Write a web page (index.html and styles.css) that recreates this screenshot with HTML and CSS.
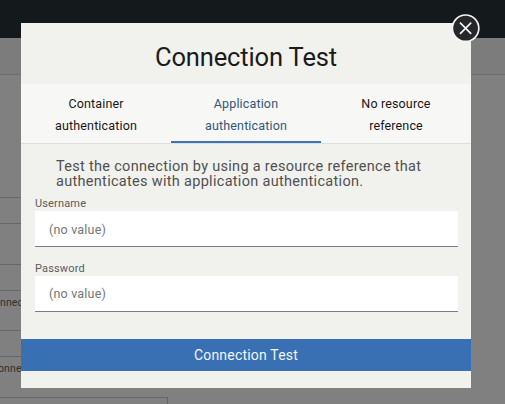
FILE: index.html
```html
<!DOCTYPE html>
<html lang="en">
<head>
<meta charset="utf-8">
<title>Connection Test</title>
<link rel="stylesheet" href="styles.css">
</head>
<body>
<div class="page" aria-hidden="true">
  <div class="topbar"></div>
  <div class="subbar"></div>
  <div class="field first"></div>
  <div class="field"></div>
  <div class="note">nnec</div>
  <div class="field"></div>
  <div class="note last">onne</div>
  <div class="panel"></div>
</div>
<main class="modal">
  <button class="close" aria-label="Close">
    <svg width="30" height="30" viewBox="0 0 30 30"><circle cx="14.6" cy="15.2" r="13.2" fill="#252729" stroke="#f4f4f2" stroke-width="1.7"/><path d="M9 9.6l11.2 11.2M20.2 9.6L9 20.8" stroke="#f4f4f2" stroke-width="1.7" fill="none"/></svg>
  </button>
  <h1>Connection Test</h1>
  <nav class="tabs">
    <a class="tab">Container<br>authentication</a>
    <a class="tab active">Application<br>authentication</a>
    <a class="tab">No resource<br>reference</a>
  </nav>
  <p class="description">Test the connection by using a resource reference that<br>authenticates with application authentication.</p>
  <form>
    <label>Username</label>
    <div class="input">(no value)</div>
    <label>Password</label>
    <div class="input password">(no value)</div>
  </form>
  <button class="submit">Connection Test</button>
</main>
</body>
</html>
```
FILE: styles.css
```css
* { box-sizing: border-box; }
body {
  margin: 0;
  width: 505px;
  height: 404px;
  overflow: hidden;
  background: #808080;
  font-family: Roboto, "Open Sans", sans-serif;
}
.page { height: 404px; overflow: hidden; }
.topbar { height: 38px; background: #141a1c; }
.subbar { height: 37px; background: #7c7c7c; border-bottom: 1px solid #6d6d6d; }
.field { width: 168px; height: 27px; border: solid #626870; border-width: 1px 0; margin-top: 40px; }
.field.first { margin-top: 122px; }
.note { height: 39px; padding-top: 5px; font-size: 10.5px; line-height: 13px; color: #303030; letter-spacing: .1px; }
.note + .field { margin-top: 0; }
.note.last { height: 40px; margin-left: -2px; }
.panel { width: 168px; height: 20px; border: 1px solid #666; border-left: 0; }
.modal {
  position: absolute;
  left: 21px;
  top: 23px;
  width: 450px;
  height: 365px;
  background: #f1f2ee;
}
button { border: 0; padding: 0; font-family: inherit; }
.close { position: absolute; right: -10px; top: -10px; width: 30px; height: 30px; background: none; }
.close svg { display: block; }
h1 {
  margin: 0;
  height: 61px;
  padding-top: 18px;
  font-size: 25.5px;
  line-height: 32px;
  font-weight: 400;
  text-align: center;
  color: #1b1b1b;
  letter-spacing: -.15px;
}
.tabs { display: flex; height: 60px; background: #f7f7f6; border-bottom: 1px solid #dedede; }
.tab {
  width: 150px;
  padding-top: 9px;
  text-align: center;
  font-size: 12.5px;
  line-height: 22px;
  letter-spacing: .15px;
  color: #171717;
}
.tab.active { color: #325779; border-bottom: 2px solid #3a75bc; }
.description {
  margin: 0;
  height: 52px;
  padding: 15px 0 0 35px;
  font-size: 14.5px;
  line-height: 15px;
  white-space: nowrap;
  letter-spacing: .3px;
  color: #505050;
}
form { padding: 0 13px 0 14px; height: 143px; }
label { display: block; height: 15px; font-size: 11px; line-height: 15px; letter-spacing: .15px; color: #5c5c5c; }
.input {
  height: 36px;
  margin-bottom: 14px;
  padding-left: 14px;
  background: #fff;
  border-bottom: 1px solid #7d7d7d;
  font-size: 12.5px;
  line-height: 37px;
  letter-spacing: .2px;
  color: #757575;
}
.input.password { line-height: 35px; }
.submit {
  display: block;
  width: 450px;
  height: 32px;
  background: #3970b3;
  color: #f2f6fb;
  font-size: 14px;
  line-height: 32px;
  letter-spacing: .2px;
}
```
